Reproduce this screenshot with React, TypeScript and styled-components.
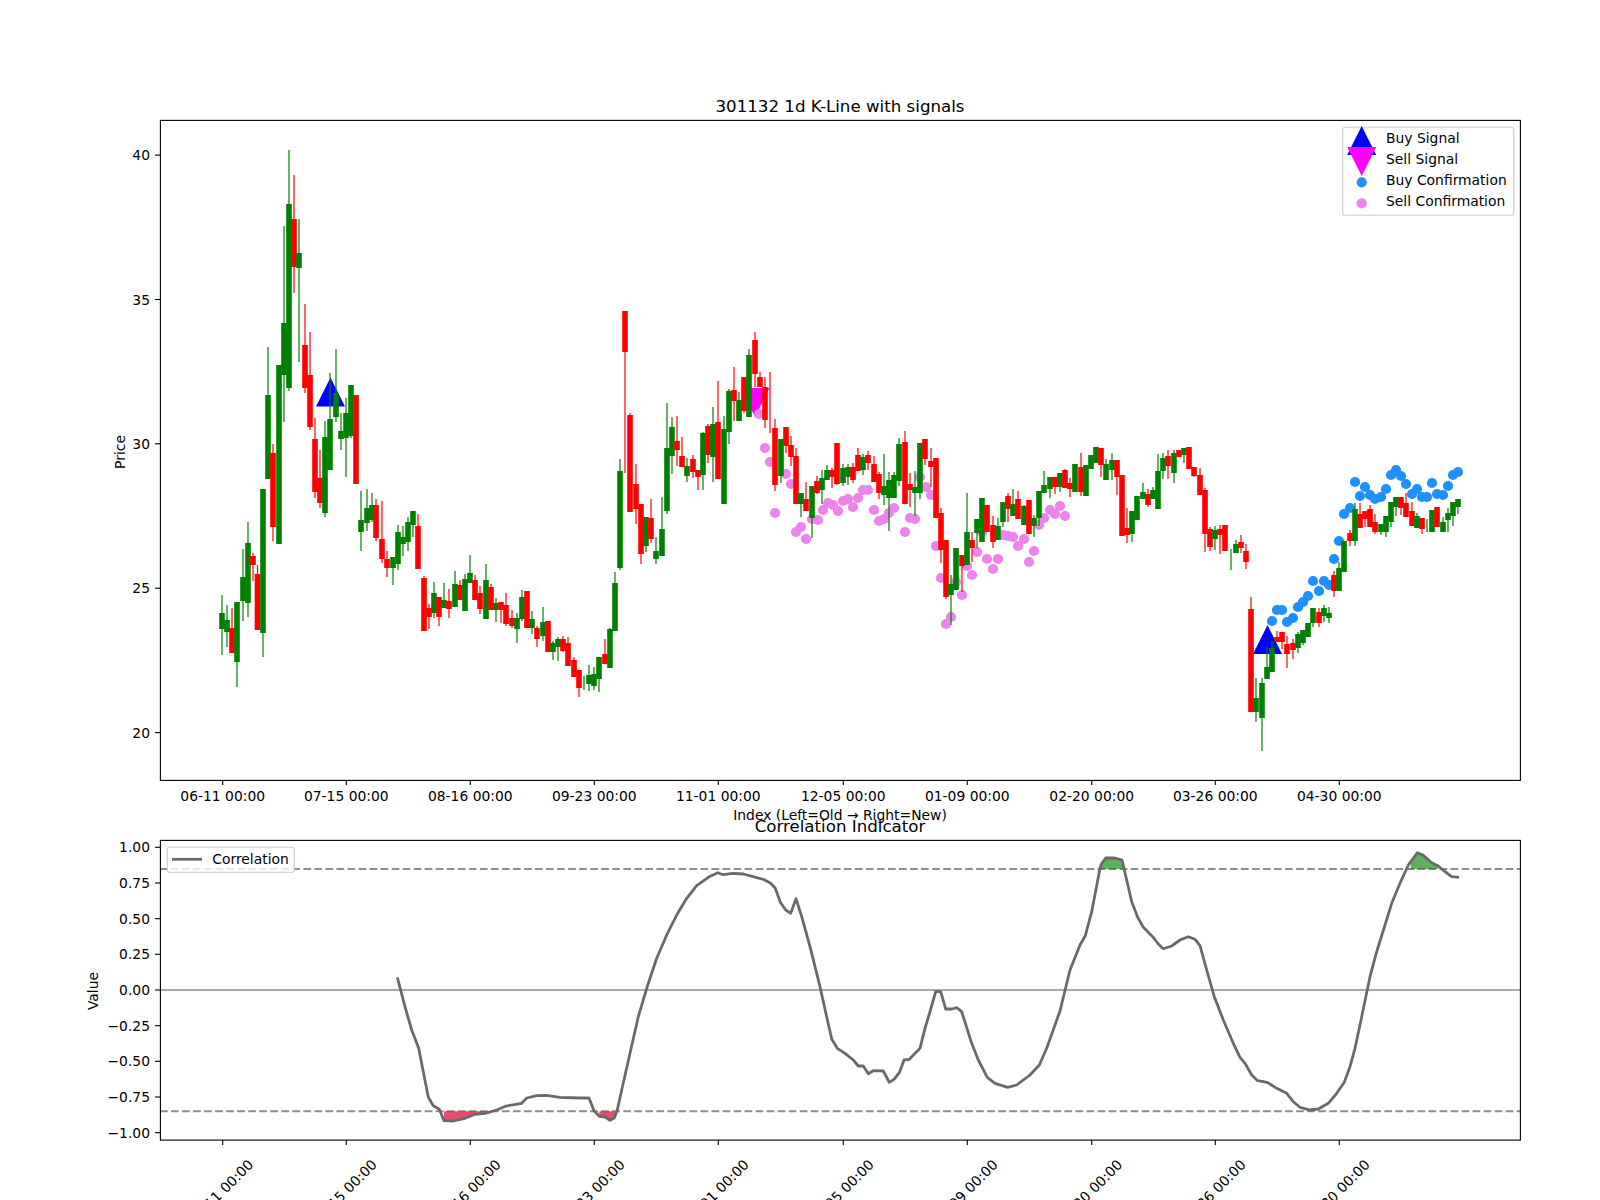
import React from "react";
import styled, { createGlobalStyle } from "styled-components";

const GlobalStyle = createGlobalStyle`
  html, body { margin: 0; padding: 0; background: #fff; overflow: hidden; }
  #root { width: 1600px; height: 1200px; }
`;

type Tone = "G" | "R";
type Candle = [number, Tone, number, number, number, number];

const candles: Candle[] = [
  [222,"G",595,613,629,655],[227,"G",605,620,632,647],[232,"R",608,628,653,653],[237,"G",602,602,662,687],
  [243,"G",549,577,601,621],[248,"G",522,543,603,617],[253,"R",553,556,565,581],[257.5,"R",565,574,630,630],
  [263,"G",489,489,633,657],[268,"G",347,395,479,479],[273,"R",444,453,527,541],[279,"G",365,365,544,544],
  [284,"G",226,323,375,422],[289,"G",150,204,388,391],[294,"R",175,219,267,293],[299,"G",219,253,268,362],
  [305,"R",304,345,388,393],[310,"R",332,375,427,430],[315,"R",418,439,492,498],[320,"R",450,478,503,508],
  [325,"G",421,437,513,517],[330,"G",373,419,470,470],[336,"G",349,393,417,422],[341,"G",413,431,439,450],
  [346,"G",398,413,438,477],[351,"G",385,385,436,438],[356,"R",395,395,484,484],
  [361,"G",491,520,532,551],[367,"G",489,508,523,531],[372,"G",493,505,520,522],[376,"R",499,505,538,541],
  [382,"R",501,539,559,563],[387,"R",551,559,568,577],[393,"G",557,557,568,585],[398,"G",525,532,564,570],
  [403,"G",526,537,544,556],[408,"G",517,522,542,551],[413,"G",511,511,525,537],[418,"R",514,526,569,569],
  [424,"R",576,578,631,631],[429,"R",604,608,617,629],[434,"G",582,593,613,618],[439,"R",597,597,617,626],
  [444,"G",583,600,608,608],[449,"R",589,601,609,618],[455,"G",571,584,607,607],[460,"R",580,585,600,600],
  [465,"G",574,579,611,611],[470,"G",555,573,583,583],[475,"R",575,580,600,600],[480,"R",586,593,609,614],
  [486,"G",564,580,619,619],[491,"R",584,587,610,610],[496,"G",598,603,610,622],[501,"R",602,602,610,623],
  [506,"R",593,605,624,626],[512,"R",610,618,626,628],[517,"G",613,618,629,643],[522,"G",590,597,619,621],
  [527,"R",591,591,628,628],[532,"G",611,619,628,634],[537,"R",626,628,639,647],[543,"G",607,622,636,641],
  [548,"R",621,621,652,652],[553,"G",641,643,652,660],[558,"G",637,639,647,661],[563,"R",636,639,651,652],
  [568,"R",637,643,666,666],[574,"R",657,660,677,677],[579,"R",670,670,688,697],[584,"G",676,0,0,690],
  [589,"G",665,675,684,691],[594,"G",667,674,686,690],[599,"G",657,657,679,692],[605,"R",639,654,664,664],
  [610,"G",628,629,668,668],[615,"G",572,583,631,631],[620,"G",459,471,568,570],[625,"R",311,311,352,473],
  [630,"R",413,415,512,512],[636,"R",464,484,509,524],[641,"R",504,504,554,564],[646,"G",517,517,546,552],
  [651,"R",499,518,539,543],[656,"G",537,551,559,564],[662,"G",497,529,556,556],[667,"G",403,448,511,514],
  [672,"G",417,427,456,474],[677,"R",416,441,450,466],[682,"R",437,456,467,467],[687,"G",458,466,476,482],
  [693,"R",455,459,472,478],[698,"R",470,470,477,490],[703,"G",432,433,475,490],[708,"R",424,426,455,463],
  [713,"G",407,424,457,482],[718,"R",381,422,479,479],[724,"G",416,429,504,504],[729,"G",389,391,432,444],
  [734,"R",367,390,401,421],[739,"G",392,400,421,421],[744,"R",377,377,411,413],[749,"G",349,355,417,417],
  [755,"R",332,340,374,387],[760,"R",372,377,387,387],[765,"R",377,387,420,428],[770,"R",372,0,0,433],
  [775,"R",419,428,485,491],[781,"G",439,439,476,483],[786,"R",427,427,446,453],[791,"R",436,445,457,466],
  [796,"R",448,456,504,504],[801,"G",493,493,504,517],[806,"R",482,499,511,511],[812,"G",486,486,518,538],
  [817,"R",476,481,493,494],[822,"G",470,478,490,504],[827,"G",465,470,480,480],[832,"R",468,470,477,488],
  [837,"R",443,443,484,485],[843,"G",464,468,483,486],[848,"G",464,467,477,485],[853,"R",463,467,480,483],
  [858,"R",448,455,471,471],[863,"G",454,457,470,475],[868,"R",451,455,463,470],[874,"R",456,464,482,482],
  [879,"R",472,474,493,499],[884,"G",454,486,495,505],[889,"G",472,480,498,531],[894,"G",472,475,498,498],
  [899,"G",438,444,481,486],[905,"R",431,442,504,504],[910,"R",473,484,490,507],[915,"G",471,487,493,516],
  [920,"G",443,443,493,499],[925,"R",439,439,459,465],[931,"R",448,461,467,487],[936,"R",458,458,518,518],
  [941,"R",508,513,550,563],[946,"R",540,540,597,599],[951,"G",575,584,595,625],[956,"G",548,548,590,590],
  [962,"R",555,555,566,592],[967,"G",493,532,565,565],[972,"R",532,540,548,562],[977,"G",519,519,533,548],
  [982,"G",498,498,542,542],[987,"R",505,505,532,532],[993,"R",516,525,542,548],[998,"G",518,526,540,540],
  [1003,"G",502,502,522,527],[1008,"R",493,496,509,522],[1013,"G",489,504,516,516],[1018,"R",491,499,519,519],
  [1024,"G",505,506,525,525],[1029,"R",500,500,534,534],[1034,"G",515,518,526,537],[1039,"G",491,491,518,526],
  [1044,"G",471,485,493,493],[1050,"G",477,477,489,498],[1055,"R",477,477,487,494],[1060,"G",473,473,487,492],
  [1065,"R",469,470,488,488],[1070,"R",478,483,489,497],[1075,"G",464,464,492,492],[1081,"R",453,467,492,496],
  [1086,"G",465,465,496,496],[1091,"G",455,455,469,469],[1096,"G",447,447,463,463],[1101,"R",448,448,465,477],
  [1106,"G",459,464,480,480],[1112,"G",453,460,470,480],[1117,"R",460,460,477,495],[1122,"R",475,475,536,536],
  [1127,"R",508,528,535,543],[1132,"G",511,511,534,542],[1137,"G",496,496,520,520],[1143,"G",483,492,499,499],
  [1148,"R",489,494,505,507],[1153,"G",487,490,499,499],[1158,"G",454,471,509,509],[1163,"G",453,458,471,479],
  [1168,"R",450,456,466,479],[1174,"G",450,453,473,483],[1179,"R",450,450,457,457],[1184,"G",448,448,455,463],
  [1189,"R",447,447,469,469],[1194,"R",467,467,476,477],[1200,"R",468,475,495,495],[1205,"R",488,490,534,552],
  [1210,"R",527,529,547,551],[1215,"G",526,530,539,550],[1220,"R",525,529,535,554],[1225,"R",525,525,551,551],
  [1231,"G",549,0,0,570],[1236,"G",540,544,553,553],[1241,"R",535,542,548,553],[1246,"R",544,551,562,569],
  [1251,"R",597,609,712,712],[1256,"G",678,698,712,722],[1262,"G",678,683,718,751],[1267,"G",647,667,679,679],
  [1272,"G",641,648,672,672],[1277,"R",631,637,642,642],[1282,"R",632,632,642,649],[1287,"R",636,644,654,668],
  [1293,"R",639,643,650,659],[1298,"G",632,634,648,653],[1303,"G",630,630,643,645],[1308,"G",623,623,637,637],
  [1313,"G",608,608,623,627],[1319,"R",608,612,623,627],[1324,"G",605,608,616,622],[1329,"G",607,613,618,623],
  [1334,"R",571,575,591,597],[1339,"G",562,568,591,591],[1344,"G",541,541,572,572],[1350,"R",530,533,541,546],
  [1355,"G",503,509,541,546],[1360,"R",503,514,528,528],[1365,"R",511,511,519,527],[1370,"R",505,509,527,527],
  [1375,"R",514,522,532,534],[1381,"G",524,524,532,535],[1386,"G",516,516,532,537],[1391,"G",502,502,522,527],
  [1396,"G",497,497,507,516],[1401,"R",497,497,508,515],[1406,"R",493,503,517,517],[1412,"R",502,511,526,526],
  [1417,"G",513,516,528,528],[1422,"R",518,518,529,534],[1427,"G",519,0,0,532],[1432,"G",510,510,532,532],
  [1437,"R",507,507,527,527],[1443,"G",517,522,532,532],[1448,"G",508,513,520,532],[1453,"G",502,502,516,526],
  [1458,"G",499,499,507,514],
];

const sellDots: [number, number][] = [
  [759,414],[765,448],[770,462],[775,513],[786,474],[791,484],[796,532],[801,527],[806,539],[812,519],[818,520],
  [823,510],[828,503],[833,505],[838,511],[843,501],[848,499],[853,507],[858,498],[863,490],[868,490],[874,510],
  [879,521],[884,519],[889,513],[894,508],[905,532],[910,518],[915,519],[920,477],[926,487],[931,495],[936,546],
  [941,578],[951,617],[946,624],[956,582],[962,595],[967,566],[972,575],[977,552],[982,532],[987,559],[993,569],
  [998,559],[1003,535],[1008,536],[1013,537],[1018,546],[1024,539],[1029,562],[1034,551],[1039,525],[1044,518],
  [1050,510],[1055,514],[1060,506],[1065,516],
];

const buyDots: [number, number][] = [
  [1272,621],[1277,610],[1282,610],[1287,622],[1293,618],[1298,607],[1303,602],[1308,596],[1313,581],[1319,591],
  [1324,581],[1329,585],[1334,559],[1339,541],[1344,514],[1350,508],[1355,482],[1360,496],[1365,487],[1370,495],
  [1375,499],[1381,497],[1386,489],[1391,475],[1396,470],[1401,476],[1406,484],[1412,494],[1417,489],[1422,497],
  [1427,497],[1432,483],[1437,494],[1443,495],[1448,486],[1453,475],[1458,472],
];

const curve =
  "397.3,977.3 405,1006.7 411.7,1030 418.7,1048.3 423.3,1071.7 428.3,1097.3 433.3,1105.7 439.3,1109.3 444,1120.7 453.3,1121 465,1118.3 475,1114.3 485,1113.3 496.7,1110 506,1106 521.7,1103.3 526.7,1098 536.7,1095.7 546.7,1095.3 560,1097.3 580,1098 589,1098 594,1110.7 599.3,1116.3 605,1117 610,1120.3 614.3,1118 617.3,1110 621.7,1090 630,1053.3 638.3,1016.7 646.7,988.3 656.7,958.3 666.7,935 676.7,915 686.7,898.3 696.7,885.7 708.3,877.3 717.7,872.7 723.3,874.7 733.3,873.3 743.3,874 753.3,876.7 764.3,879.7 770.7,883.3 775.3,888.3 780.3,902.3 785.7,910 790.7,913.3 796,898.7 801.7,916.7 810,946.7 820,986.7 826.7,1016.7 831.7,1039 837.3,1048.3 845,1053.3 853.3,1060 858.3,1066 863.3,1066 868.3,1073.7 873.3,1070.7 883.3,1071 889.3,1082.3 894,1079.3 899.3,1072.7 904,1060 909.3,1059.3 920,1048.3 925,1028.3 930,1011.7 935.7,991.7 940.7,991.7 945.7,1009 951.7,1009 956.7,1007.7 961.7,1011.7 971.7,1043.3 978.3,1060 987.3,1077.3 995,1083.3 1007.7,1087.3 1016.7,1085 1030,1075 1039.3,1065 1046.7,1048.3 1060,1011 1070,970 1080,945 1085.3,935.7 1091.7,911.7 1100,868.3 1101.7,863.3 1106,858 1115,858 1122,860 1126.7,880 1131.7,901.7 1137.7,917.3 1143.3,927.3 1152.7,936.7 1158.3,944 1163.3,948.7 1171.7,946 1180,940 1188.3,936.7 1195,939.3 1200,945.7 1206.7,970 1214.3,996.7 1223.3,1020 1233.3,1043.3 1240,1057.3 1245,1063.3 1251.7,1075 1257.7,1080.7 1267.3,1082.3 1276.7,1088.3 1286.7,1093.3 1293.3,1101.7 1300,1107.3 1310,1110 1318.3,1109 1328.3,1103.3 1336.7,1093.3 1344.3,1082.3 1350,1066.7 1355,1048.3 1361.7,1016.7 1370,976.7 1376.7,951.7 1385,925 1391.7,903.3 1400,883.3 1408.3,865 1417.3,852.7 1423.3,855.3 1431.7,862.7 1438.3,866 1445,871.7 1451.7,876.7 1459,877.3";

const bearBands = [
  "444,1111.3 444,1120.7 453.3,1121 465,1118.3 475,1114.3 485,1113.3 490,1111.3",
  "599.3,1111.3 599.3,1116.3 605,1117 610,1120.3 614.3,1118 617.3,1111.3",
];
const bullBands = [
  "1101,869 1101.7,863.3 1106,858 1115,858 1122,860 1124,869",
  "1410.7,869 1410.7,862 1417.3,852.7 1423.3,855.3 1431.7,862.7 1438,866 1438,869",
];

const topTicks: [number, string][] = [
  [222.7,"06-11 00:00"],[346.3,"07-15 00:00"],[470.3,"08-16 00:00"],[594.3,"09-23 00:00"],[718.3,"11-01 00:00"],
  [843.3,"12-05 00:00"],[967.3,"01-09 00:00"],[1091.7,"02-20 00:00"],[1215.3,"03-26 00:00"],[1339.3,"04-30 00:00"],
];
const priceTicks: [number, string][] = [[155.1,"40"],[299.5,"35"],[443.8,"30"],[588.2,"25"],[732.6,"20"]];
const corrTicks: [number, string][] = [
  [847.3,"1.00"],[883,"0.75"],[918.7,"0.50"],[954.3,"0.25"],[990,"0.00"],
  [1025.7,"\u22120.25"],[1061.3,"\u22120.50"],[1097,"\u22120.75"],[1132.7,"\u22121.00"],
];

const Page = styled.main`
  display: flex;
  flex-direction: column;
  width: 1600px;
  height: 1200px;
  background: #fff;
`;
const PriceChart = styled.svg`
  display: block;
  width: 1600px;
  height: 820px;
  overflow: visible;
  flex: none;
`;
const CorrChart = styled.svg`
  display: block;
  width: 1600px;
  height: 380px;
  overflow: visible;
  flex: none;
`;
const Label = styled.text`
  font-family: "DejaVu Sans", sans-serif;
  font-size: 13.89px;
  fill: #000;
`;
const CenterLabel = styled(Label)`
  text-anchor: middle;
`;
const YLabel = styled(Label)`
  text-anchor: end;
`;
const SlantLabel = styled(Label)`
  text-anchor: middle;
  dominant-baseline: central;
`;
const Title = styled.text`
  font-family: "DejaVu Sans", sans-serif;
  font-size: 16.67px;
  fill: #000;
  text-anchor: middle;
`;
const Frame = styled.rect`
  fill: none;
  stroke: #000;
  stroke-width: 1.11px;
`;
const Tick = styled.line`
  stroke: #000;
  stroke-width: 1.11px;
`;
const Wick = styled.line<{ $tone: Tone }>`
  stroke: ${(p) => (p.$tone === "G" ? "#008000" : "#ff0000")};
  stroke-width: 1.2px;
`;
const Body = styled.rect<{ $tone: Tone }>`
  fill: ${(p) => (p.$tone === "G" ? "#008000" : "#ff0000")};
`;
const Dot = styled.circle<{ $kind: "buy" | "sell" }>`
  fill: ${(p) => (p.$kind === "buy" ? "#1e90ff" : "#ee82ee")};
`;
const Marker = styled.polygon<{ $kind: "buy" | "sell" }>`
  fill: ${(p) => (p.$kind === "buy" ? "#0000ff" : "#ff00ff")};
`;
const LegendBox = styled.rect`
  fill: #fff;
  fill-opacity: 0.8;
  stroke: #ccc;
  stroke-width: 1.11px;
`;
const ZeroLine = styled.line`
  stroke: #a9a9a9;
  stroke-width: 2.08px;
`;
const LimitLine = styled.line`
  stroke: #8c8c8c;
  stroke-width: 2.08px;
  stroke-dasharray: 7.7 3.33;
`;
const CorrLine = styled.polyline`
  fill: none;
  stroke: #696969;
  stroke-width: 2.78px;
  stroke-linejoin: round;
`;
const LegendLine = styled.line`
  stroke: #696969;
  stroke-width: 2.78px;
`;
const Band = styled.polygon<{ $kind: "bull" | "bear" }>`
  fill: ${(p) => (p.$kind === "bull" ? "#008000" : "#dc143c")};
  fill-opacity: ${(p) => (p.$kind === "bull" ? 0.62 : 0.75)};
`;

const up = (x: number, apex: number) => `${x - 14.5},${apex + 29} ${x + 14.5},${apex + 29} ${x},${apex}`;
const down = (x: number, top: number) => `${x - 14.5},${top} ${x + 14.5},${top} ${x},${top + 29}`;

export default function App() {
  return (
    <Page>
      <GlobalStyle />
      <PriceChart viewBox="0 0 1600 820">
        <Title x={840} y={112}>301132 1d K-Line with signals</Title>
        <Marker $kind="buy" points={up(330.5, 377.5)} />
        <Marker $kind="buy" points={up(1267.5, 625)} />
        <Marker $kind="sell" points={down(755, 388)} />
        {sellDots.map(([x, y]) => <Dot key={`s${x}-${y}`} $kind="sell" cx={x} cy={y} r={5.1} />)}
        {buyDots.map(([x, y]) => <Dot key={`b${x}-${y}`} $kind="buy" cx={x} cy={y} r={5.1} />)}
        {candles.map(([x, tone, wt, bt, bb, wb]) => (
          <g key={x}>
            <Wick $tone={tone} x1={x} x2={x} y1={wt} y2={wb} />
            {bt > 0 && <Body $tone={tone} x={x - 2.8} width={5.6} y={bt} height={bb - bt} />}
          </g>
        ))}
        <Frame x={160.4} y={120.4} width={1360} height={660} />
        {priceTicks.map(([y, t]) => (
          <g key={t}>
            <Tick x1={155} x2={160} y1={y} y2={y} />
            <YLabel x={150} y={y + 5}>{t}</YLabel>
          </g>
        ))}
        {topTicks.map(([x, t]) => (
          <g key={t}>
            <Tick x1={x} x2={x} y1={780} y2={785} />
            <CenterLabel x={x} y={801}>{t}</CenterLabel>
          </g>
        ))}
        <CenterLabel x={0} y={0} transform="translate(125 452) rotate(-90)">Price</CenterLabel>
        <CenterLabel x={840} y={820}>Index (Left=Old → Right=New)</CenterLabel>
        <LegendBox x={1342.7} y={127.3} width={171} height={88} rx={2.8} />
        <Marker $kind="buy" points={up(1361.7, 126)} />
        <Marker $kind="sell" points={down(1361.7, 147)} />
        <Dot $kind="buy" cx={1361.7} cy={182.3} r={5.1} />
        <Dot $kind="sell" cx={1361.7} cy={203.3} r={5.1} />
        <Label x={1386} y={143}>Buy Signal</Label>
        <Label x={1386} y={164}>Sell Signal</Label>
        <Label x={1386} y={185}>Buy Confirmation</Label>
        <Label x={1386} y={206}>Sell Confirmation</Label>
      </PriceChart>
      <CorrChart viewBox="0 820 1600 380">
        <Title x={840} y={832}>Correlation Indicator</Title>
        <ZeroLine x1={160} x2={1520} y1={990} y2={990} />
        <LimitLine x1={160} x2={1520} y1={869} y2={869} />
        <LimitLine x1={160} x2={1520} y1={1111.3} y2={1111.3} />
        {bearBands.map((p) => <Band key={p} $kind="bear" points={p} />)}
        {bullBands.map((p) => <Band key={p} $kind="bull" points={p} />)}
        <CorrLine points={curve} />
        <Frame x={160.4} y={840.4} width={1360} height={299.7} />
        {corrTicks.map(([y, t]) => (
          <g key={t}>
            <Tick x1={155} x2={160} y1={y} y2={y} />
            <YLabel x={150} y={y + 5}>{t}</YLabel>
          </g>
        ))}
        {topTicks.map(([x, t]) => (
          <g key={t}>
            <Tick x1={x} x2={x} y1={1140} y2={1145} />
            <SlantLabel x={x - 2} y={1192} transform={`rotate(-45 ${x - 2} 1192)`}>{t}</SlantLabel>
          </g>
        ))}
        <CenterLabel x={0} y={0} transform="translate(98 991) rotate(-90)">Value</CenterLabel>
        <LegendBox x={167.3} y={847.3} width={127} height={25} rx={2.8} />
        <LegendLine x1={172} x2={202} y1={859.3} y2={859.3} />
        <Label x={212.3} y={864}>Correlation</Label>
      </CorrChart>
    </Page>
  );
}
